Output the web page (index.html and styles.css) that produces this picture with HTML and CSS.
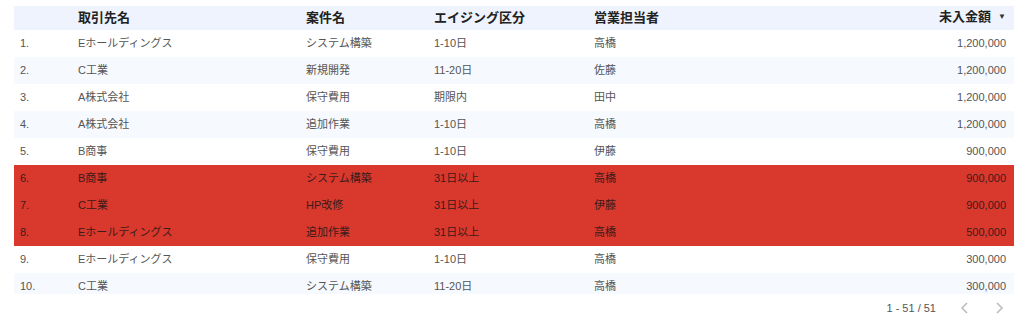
FILE: index.html
```html
<!DOCTYPE html>
<html lang="ja">
<head>
<meta charset="utf-8">
<link rel="stylesheet" href="styles.css">
</head>
<body>
<div class="page">
  <div class="table">
    <div class="row head">
      <div class="c idx"></div>
      <div class="c">取引先名</div>
      <div class="c">案件名</div>
      <div class="c">エイジング区分</div>
      <div class="c">営業担当者</div>
      <div class="c amt">未入金額<span class="sort">▼</span></div>
    </div>
    <div class="row"><div class="c idx">1.</div><div class="c">Eホールディングス</div><div class="c">システム構築</div><div class="c">1-10日</div><div class="c">高橋</div><div class="c amt">1,200,000</div></div>
    <div class="row alt"><div class="c idx">2.</div><div class="c">C工業</div><div class="c">新規開発</div><div class="c">11-20日</div><div class="c">佐藤</div><div class="c amt">1,200,000</div></div>
    <div class="row"><div class="c idx">3.</div><div class="c">A株式会社</div><div class="c">保守費用</div><div class="c">期限内</div><div class="c">田中</div><div class="c amt">1,200,000</div></div>
    <div class="row alt"><div class="c idx">4.</div><div class="c">A株式会社</div><div class="c">追加作業</div><div class="c">1-10日</div><div class="c">高橋</div><div class="c amt">1,200,000</div></div>
    <div class="row"><div class="c idx">5.</div><div class="c">B商事</div><div class="c">保守費用</div><div class="c">1-10日</div><div class="c">伊藤</div><div class="c amt">900,000</div></div>
    <div class="row hot"><div class="c idx">6.</div><div class="c">B商事</div><div class="c">システム構築</div><div class="c">31日以上</div><div class="c">高橋</div><div class="c amt">900,000</div></div>
    <div class="row hot"><div class="c idx">7.</div><div class="c">C工業</div><div class="c">HP改修</div><div class="c">31日以上</div><div class="c">伊藤</div><div class="c amt">900,000</div></div>
    <div class="row hot"><div class="c idx">8.</div><div class="c">Eホールディングス</div><div class="c">追加作業</div><div class="c">31日以上</div><div class="c">高橋</div><div class="c amt">500,000</div></div>
    <div class="row"><div class="c idx">9.</div><div class="c">Eホールディングス</div><div class="c">保守費用</div><div class="c">1-10日</div><div class="c">高橋</div><div class="c amt">300,000</div></div>
    <div class="row alt"><div class="c idx">10.</div><div class="c">C工業</div><div class="c">システム構築</div><div class="c">11-20日</div><div class="c">高橋</div><div class="c amt">300,000</div></div>
  </div>
  <div class="pager">
    <span class="range">1 - 51 / 51</span>
    <span class="btn"><svg width="9" height="12" viewBox="0 0 9 12"><path d="M7 1 L2 6 L7 11" fill="none" stroke="#bdbdbd" stroke-width="1.6"/></svg></span>
    <span class="btn"><svg width="9" height="12" viewBox="0 0 9 12"><path d="M2 1 L7 6 L2 11" fill="none" stroke="#bdbdbd" stroke-width="1.6"/></svg></span>
  </div>
</div>
</body>
</html>
```

FILE: styles.css
```css
html, body {
  margin: 0;
  padding: 0;
  background: #ffffff;
}
body {
  font-family: "Liberation Sans", "Noto Sans CJK JP", Arial, sans-serif;
  font-size: 11px;
  color: #555555;
}
.page {
  padding: 6px 10px 0 14px;
}
.table {
  width: 1000px;
  height: 288px;
  overflow: hidden;
}
.row {
  display: grid;
  grid-template-columns: 64px 228px 128px 160px 1fr 200px;
  height: 27px;
  box-sizing: border-box;
  align-items: center;
  line-height: 13px;
  white-space: nowrap;
}
.row.alt {
  background: #f6f9fe;
}
.row.head {
  height: 24px;
  padding-bottom: 1px;
  background: #eef3fd;
  font-weight: bold;
  font-size: 13px;
  line-height: 15px;
  color: #222222;
}
.row.hot {
  background: #d9382d;
  color: #3a1c1a;
}
.c.idx {
  padding-left: 6px;
}
.c.amt {
  text-align: right;
  padding-right: 8px;
}
.sort {
  font-size: 8px;
  margin-left: 7px;
  position: relative;
  top: -2px;
  color: #333;
}
.pager {
  display: flex;
  justify-content: flex-end;
  align-items: center;
  height: 28px;
  padding-right: 3px;
}
.range {
  margin-right: 16px;
  color: #555555;
}
.btn {
  width: 24px;
  height: 24px;
  display: flex;
  align-items: center;
  justify-content: center;
}
.btn + .btn {
  margin-left: 11px;
}
```
